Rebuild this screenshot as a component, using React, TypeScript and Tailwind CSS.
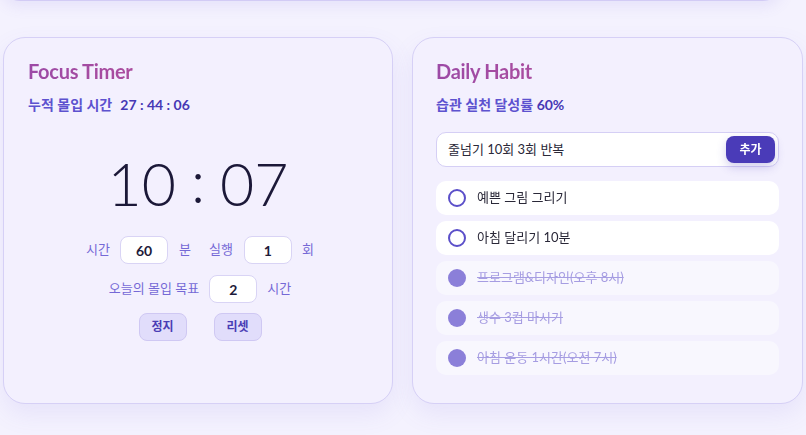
import { useState } from 'react';

const habits = [
  { id: 1, label: '예쁜 그림 그리기', done: false },
  { id: 2, label: '아침 달리기 10분', done: false },
  { id: 3, label: '프로그램&디자인(오후 8시)', done: true },
  { id: 4, label: '생수 3컵 마시기', done: true },
  { id: 5, label: '아침 운동 1시간(오전 7시)', done: true },
];

const font = { fontFamily: 'Lato, "Noto Sans CJK KR", sans-serif' };

function NumBox({ value }: { value: string }) {
  return (
    <div className="flex h-[28px] w-[48px] items-center justify-center rounded-lg border border-[#d9d4f5] bg-white text-[14px] font-bold text-[#1e1b3a]">
      {value}
    </div>
  );
}

function Title({ children }: { children: string }) {
  return (
    <h2 className="bg-gradient-to-r from-[#9c4aa6] to-[#cc4f8c] bg-clip-text text-[20px] font-bold tracking-[-0.3px] text-transparent">
      {children}
    </h2>
  );
}

export default function App() {
  const [draft, setDraft] = useState('줄넘기 10회 3회 반복');

  return (
    <div className="h-[435px] w-[806px] overflow-hidden bg-[#f4f2fe]" style={font}>
      <div className="-mt-[30px] h-[31px] w-[783px] rounded-b-[20px] border border-[#d2cbf5] bg-[#f2effd] shadow-[0_6px_14px_rgba(120,100,220,0.10)]" />

      <div className="mt-[36px] flex gap-[19px] pl-[3px]">
        {/* Focus Timer */}
        <section className="flex h-[367px] w-[390px] flex-col rounded-[22px] border border-[#d6d0f6] bg-[#f3f0fe] px-[24px] pt-[18px] shadow-[0_10px_24px_rgba(120,100,220,0.10)]">
          <Title>Focus Timer</Title>
          <div className="mt-[8px] flex items-center gap-[8px] text-[14px] font-semibold text-[#5d52cf]">
            <span>누적 몰입 시간</span>
            <span className="font-bold text-[#4638b5]">27 : 44 : 06</span>
          </div>

          <div className="mt-[39px] flex items-center justify-center gap-[15px] text-[59px] font-light leading-none text-[#1b1838]" style={{ fontWeight: 350 }}>
            <span>10</span>
            <span className="-mt-[6px]">:</span>
            <span>07</span>
          </div>

          <div className="mt-[23px] flex flex-col items-center gap-[11px] pl-[4px] text-[13px] text-[#7569d6]">
            <div className="flex items-center">
              <span className="mr-[10px]">시간</span>
              <NumBox value="60" />
              <span className="ml-[11px] mr-[18px]">분</span>
              <span className="mr-[11px]">실행</span>
              <NumBox value="1" />
              <span className="ml-[10px]">회</span>
            </div>
            <div className="flex items-center">
              <span className="mr-[10px]">오늘의 몰입 목표</span>
              <NumBox value="2" />
              <span className="ml-[10px]">시간</span>
            </div>
            <div className="-mt-[1px] flex items-center gap-[27px]">
              <button className="h-[28px] w-[48px] rounded-lg border border-[#cfc8f3] bg-[#e1ddfb] text-[12px] font-bold text-[#4a3db5]">
                정지
              </button>
              <button className="h-[28px] w-[48px] rounded-lg border border-[#cfc8f3] bg-[#e1ddfb] text-[12px] font-bold text-[#4a3db5]">
                리셋
              </button>
            </div>
          </div>
        </section>

        {/* Daily Habit */}
        <section className="flex h-[367px] w-[391px] flex-col rounded-[22px] border border-[#d6d0f6] bg-[#f3f0fe] px-[23px] pt-[18px] shadow-[0_10px_24px_rgba(120,100,220,0.10)]">
          <Title>Daily Habit</Title>
          <div className="mt-[8px] text-[14px] font-semibold text-[#5d52cf]">
            습관 실천 달성률 <span className="font-bold text-[#4638b5]">60%</span>
          </div>

          <div className="mt-[17px] flex h-[35px] items-center rounded-[10px] border border-[#d5cff5] bg-white pl-[11px] pr-[3px]">
            <input
              autoFocus
              value={draft}
              onChange={(e) => setDraft(e.target.value)}
              className="min-w-0 flex-1 bg-transparent text-[13px] text-[#2a2838] caret-[#1b1838] outline-none"
            />
            <button className="h-[27px] w-[49px] rounded-lg bg-[#4a3bb8] text-[12px] font-bold text-white shadow-[0_4px_10px_rgba(74,59,184,0.25)]">
              추가
            </button>
          </div>

          <ul className="mt-[14px] flex flex-col gap-[6px]">
            {habits.map((h) => (
              <li
                key={h.id}
                className={
                  h.done
                    ? 'flex h-[34px] items-center gap-[11px] rounded-[10px] bg-[#f8f7fe] px-[12px]'
                    : 'flex h-[34px] items-center gap-[11px] rounded-[10px] bg-white px-[12px]'
                }
              >
                {h.done ? (
                  <span className="h-[18px] w-[18px] rounded-full bg-[#8b7fd9]" />
                ) : (
                  <span className="h-[18px] w-[18px] rounded-full border-2 border-[#5b4fc9]" />
                )}
                <span
                  className={
                    h.done ? 'text-[13px] text-[#a69de2] line-through' : 'text-[13px] text-[#2a2838]'
                  }
                >
                  {h.label}
                </span>
              </li>
            ))}
          </ul>
        </section>
      </div>
    </div>
  );
}
